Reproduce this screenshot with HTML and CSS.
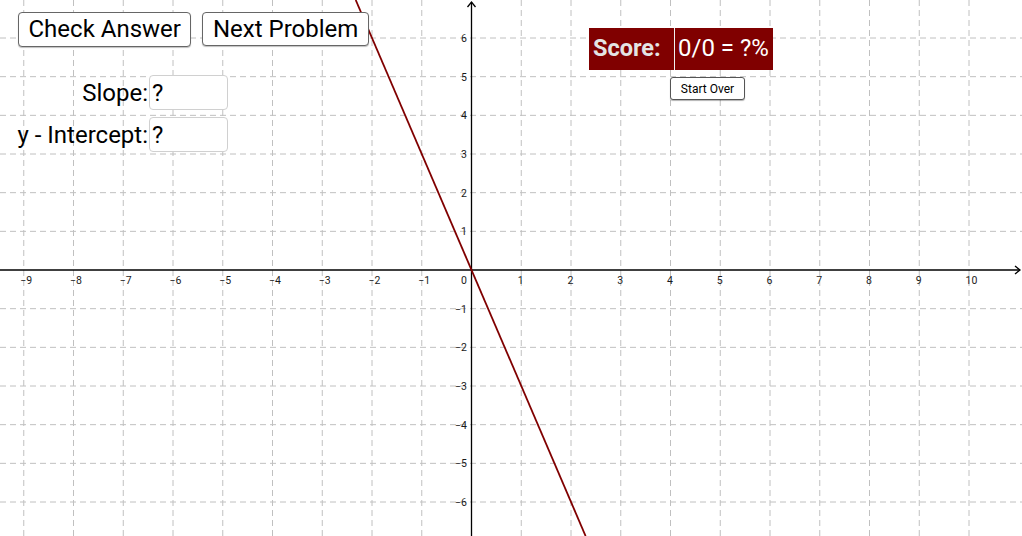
FILE: index.html
```html
<!DOCTYPE html>
<html>
<head>
<meta charset="utf-8">
<link rel="stylesheet" href="styles.css">
</head>
<body>
<div class="applet">
  <svg class="graph" width="1022" height="536" viewBox="0 0 1022 536" xmlns="http://www.w3.org/2000/svg">
    <g class="grid">
      <line x1="23.75" y1="0" x2="23.75" y2="536"/>
      <line x1="73.5" y1="0" x2="73.5" y2="536"/>
      <line x1="123.25" y1="0" x2="123.25" y2="536"/>
      <line x1="173" y1="0" x2="173" y2="536"/>
      <line x1="222.75" y1="0" x2="222.75" y2="536"/>
      <line x1="272.5" y1="0" x2="272.5" y2="536"/>
      <line x1="322.25" y1="0" x2="322.25" y2="536"/>
      <line x1="372" y1="0" x2="372" y2="536"/>
      <line x1="421.75" y1="0" x2="421.75" y2="536"/>
      <line x1="521.25" y1="0" x2="521.25" y2="536"/>
      <line x1="571" y1="0" x2="571" y2="536"/>
      <line x1="620.75" y1="0" x2="620.75" y2="536"/>
      <line x1="670.5" y1="0" x2="670.5" y2="536"/>
      <line x1="720.25" y1="0" x2="720.25" y2="536"/>
      <line x1="770" y1="0" x2="770" y2="536"/>
      <line x1="819.75" y1="0" x2="819.75" y2="536"/>
      <line x1="869.5" y1="0" x2="869.5" y2="536"/>
      <line x1="919.25" y1="0" x2="919.25" y2="536"/>
      <line x1="969" y1="0" x2="969" y2="536"/>
      <line x1="0" y1="38" x2="1022" y2="38"/>
      <line x1="0" y1="76.67" x2="1022" y2="76.67"/>
      <line x1="0" y1="115.33" x2="1022" y2="115.33"/>
      <line x1="0" y1="154" x2="1022" y2="154"/>
      <line x1="0" y1="192.67" x2="1022" y2="192.67"/>
      <line x1="0" y1="231.33" x2="1022" y2="231.33"/>
      <line x1="0" y1="308.67" x2="1022" y2="308.67"/>
      <line x1="0" y1="347.33" x2="1022" y2="347.33"/>
      <line x1="0" y1="386" x2="1022" y2="386"/>
      <line x1="0" y1="424.67" x2="1022" y2="424.67"/>
      <line x1="0" y1="463.33" x2="1022" y2="463.33"/>
      <line x1="0" y1="502" x2="1022" y2="502"/>
    </g>
    <g class="axes">
      <line x1="0" y1="270" x2="1020" y2="270"/>
      <polyline points="1015,266 1020,270 1015,274"/>
      <line x1="471.5" y1="536" x2="471.5" y2="2"/>
      <polyline points="467.5,7 471.5,2 475.5,7"/>
    </g>
    <line class="fn" x1="355.7" y1="0" x2="585.6" y2="536"/>
    <g class="xlabels">
      <text x="20.2" y="284">−9</text>
      <text x="70" y="284">−8</text>
      <text x="119.7" y="284">−7</text>
      <text x="169.5" y="284">−6</text>
      <text x="219.2" y="284">−5</text>
      <text x="269" y="284">−4</text>
      <text x="318.7" y="284">−3</text>
      <text x="368.5" y="284">−2</text>
      <text x="418.2" y="284">−1</text>
      <text x="517.7" y="284">1</text>
      <text x="567.5" y="284">2</text>
      <text x="617.2" y="284">3</text>
      <text x="667" y="284">4</text>
      <text x="716.7" y="284">5</text>
      <text x="766.5" y="284">6</text>
      <text x="816.2" y="284">7</text>
      <text x="866" y="284">8</text>
      <text x="915.7" y="284">9</text>
      <text x="965.5" y="284">10</text>
    </g>
    <g class="ylabels">
      <text x="467" y="42">6</text>
      <text x="467" y="80.7">5</text>
      <text x="467" y="119.3">4</text>
      <text x="467" y="158">3</text>
      <text x="467" y="196.7">2</text>
      <text x="467" y="235.3">1</text>
      <text x="467" y="284">0</text>
      <text x="467" y="312.7">−1</text>
      <text x="467" y="351.3">−2</text>
      <text x="467" y="390">−3</text>
      <text x="467" y="428.7">−4</text>
      <text x="467" y="467.3">−5</text>
      <text x="467" y="506">−6</text>
    </g>
  </svg>

  <div class="controls">
    <div class="buttons">
      <button class="btn btn-check">Check Answer</button>
      <button class="btn btn-next">Next Problem</button>
    </div>
    <div class="fields">
      <label class="field"><span class="field-label">Slope:</span><span class="input">?</span></label>
      <label class="field"><span class="field-label">y - Intercept:</span><span class="input">?</span></label>
    </div>
  </div>

  <div class="scorebox">
    <div class="score">
      <span class="score-label">Score:</span>
      <span class="score-value">0/0 = ?%</span>
    </div>
    <button class="btn-small">Start Over</button>
  </div>
</div>
</body>
</html>
```
FILE: styles.css
```css
html, body {
  margin: 0;
  padding: 0;
  background: #ffffff;
}

.applet {
  position: relative;
  width: 1022px;
  height: 536px;
  overflow: hidden;
  font-family: Roboto, "Liberation Sans", sans-serif;
}

.graph {
  position: absolute;
  left: 0;
  top: 0;
  display: block;
}

.grid line {
  stroke: #c0c0c0;
  stroke-width: 1;
  stroke-dasharray: 6 4;
}

.axes line,
.axes polyline {
  stroke: #000000;
  stroke-width: 1.3;
  fill: none;
}

.fn {
  stroke: #800000;
  stroke-width: 1.8;
}

.xlabels text,
.ylabels text {
  font-family: Roboto, "Liberation Sans", sans-serif;
  font-size: 10.5px;
  fill: #1a1a1a;
}

.ylabels text {
  text-anchor: end;
}

.controls {
  position: absolute;
  left: 14px;
  top: 12px;
  display: flex;
  flex-direction: column;
}

.buttons {
  display: flex;
  gap: 11px;
  margin-left: 4px;
}

.btn {
  font-family: Roboto, "Liberation Sans", sans-serif;
  font-size: 24px;
  color: #000000;
  background: #ffffff;
  border: 1px solid #666666;
  border-radius: 4px;
  padding: 0 9.5px;
  margin: 0;
  height: 35px;
  line-height: 33px;
  box-shadow: 0 1px 1px rgba(0,0,0,0.25);
}

.btn-next {
  height: 34px;
  line-height: 32px;
}

.fields {
  display: flex;
  flex-direction: column;
  gap: 7px;
  margin-top: 28px;
  width: 214px;
}

.field {
  display: flex;
  justify-content: flex-end;
  align-items: center;
  font-size: 24px;
  color: #000000;
}

.field-label {
  margin-right: 1px;
}

.input {
  width: 75px;
  height: 33px;
  border: 1px solid #d0d0d0;
  border-radius: 4px;
  background: #ffffff;
  line-height: 35px;
  padding-left: 2px;
  box-sizing: content-box;
}

.scorebox {
  position: absolute;
  left: 589px;
  top: 28px;
  display: flex;
  flex-direction: column;
  align-items: flex-start;
}

.score {
  display: flex;
  background: #800000;
  height: 42px;
  align-items: stretch;
}

.score-label {
  width: 86px;
  padding-left: 4px;
  box-sizing: border-box;
  font-weight: bold;
  font-size: 23.5px;
  color: #e4e4e4;
  line-height: 40px;
  border-right: 1px solid #f0f0f0;
}

.score-value {
  width: 98px;
  padding-left: 3px;
  box-sizing: border-box;
  font-size: 24px;
  color: #ffffff;
  line-height: 40px;
}

.btn-small {
  margin: 7px 0 0 81px;
  font-family: Roboto, "Liberation Sans", sans-serif;
  font-size: 12px;
  color: #000000;
  background: #ffffff;
  border: 1px solid #555555;
  border-radius: 3px;
  width: 75px;
  height: 23px;
  padding: 0;
  box-shadow: 0 1px 1px rgba(0,0,0,0.3);
}
```
